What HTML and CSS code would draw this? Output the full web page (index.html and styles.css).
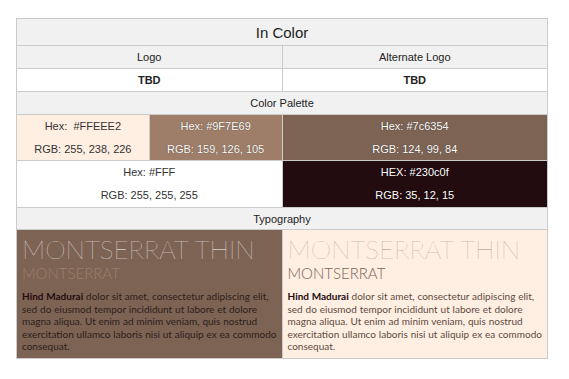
FILE: index.html
```html
<!DOCTYPE html>
<html>
<head>
<meta charset="utf-8">
<link rel="stylesheet" href="styles.css">
</head>
<body>
<div class="sheet">
  <div class="cell title span4">In Color</div>
  <div class="cell head span2">Logo</div>
  <div class="cell head span2">Alternate Logo</div>
  <div class="cell plain span2"><b>TBD</b></div>
  <div class="cell plain span2"><b>TBD</b></div>
  <div class="cell head span4">Color Palette</div>
  <div class="cell swatch sw-cream"><span>Hex:&nbsp; #FFEEE2</span><span>RGB: 255, 238, 226</span></div>
  <div class="cell swatch sw-tan dark"><span>Hex: #9F7E69</span><span>RGB: 159, 126, 105</span></div>
  <div class="cell swatch sw-brown dark span2"><span>Hex: #7c6354</span><span>RGB: 124, 99, 84</span></div>
  <div class="cell swatch sw-white span2"><span>Hex: #FFF</span><span>RGB: 255, 255, 255</span></div>
  <div class="cell swatch sw-black dark span2"><span>HEX: #230c0f</span><span>RGB: 35, 12, 15</span></div>
  <div class="cell head span4">Typography</div>
  <div class="type type-dark span2">
    <div class="thin">MONTSERRAT THIN</div>
    <div class="sub">MONTSERRAT</div>
    <p class="body"><span class="font-name">Hind Madurai</span> dolor sit amet, consectetur adipiscing elit, sed do eiusmod tempor incididunt ut labore et dolore magna aliqua. Ut enim ad minim veniam, quis nostrud exercitation ullamco laboris nisi ut aliquip ex ea commodo consequat.</p>
  </div>
  <div class="type type-light span2">
    <div class="thin">MONTSERRAT THIN</div>
    <div class="sub">MONTSERRAT</div>
    <p class="body"><span class="font-name">Hind Madurai</span> dolor sit amet, consectetur adipiscing elit, sed do eiusmod tempor incididunt ut labore et dolore magna aliqua. Ut enim ad minim veniam, quis nostrud exercitation ullamco laboris nisi ut aliquip ex ea commodo consequat.</p>
  </div>
</div>
</body>
</html>
```

FILE: styles.css
```css
html, body {
  margin: 0;
  padding: 0;
  background: #fff;
}
body {
  padding: 18px 0 0 16px;
  font-family: "Liberation Sans", Arial, sans-serif;
  color: #222;
}
.sheet {
  width: 530px;
  display: grid;
  grid-template-columns: repeat(4, 1fr);
  grid-template-rows: 26px 22px 22px 22px 45px 46px 21px 128px;
  gap: 1px;
  border: 1px solid #cbcbcb;
  background: #cbcbcb;
}
.span2 { grid-column: span 2; }
.span4 { grid-column: span 4; }
.cell {
  display: flex;
  align-items: center;
  justify-content: center;
  font-size: 11px;
  background: #fff;
}
.title {
  background: #f1f1f1;
  font-size: 15px;
  color: #222;
}
.head {
  background: #f1f1f1;
}
.plain b { font-weight: bold; }
.swatch {
  flex-direction: column;
  gap: 10px;
  line-height: 13px;
}
.dark {
  color: #fff;
  text-shadow: 0 0 1px rgba(0,0,0,0.6);
}
.sw-cream { background: #ffeee2; color: #333; }
.sw-tan { background: #9f7e69; }
.sw-brown { background: #7c6354; }
.sw-white { background: #fff; color: #333; }
.sw-black { background: #230c0f; }
.type {
  padding: 4px 2px 0 5px;
  display: flex;
  flex-direction: column;
  overflow: hidden;
}
.type-dark { background: #7c6354; }
.type-light { background: #ffeee2; }
.thin {
  font-family: Lato, sans-serif;
  font-weight: 200;
  font-size: 26px;
  line-height: 31px;
  white-space: nowrap;
}
.sub {
  font-family: Lato, sans-serif;
  font-weight: 300;
  font-size: 15px;
  line-height: 17px;
}
.type-dark .thin { color: #fff; }
.type-dark .sub { color: #9f7e69; }
.type-light .thin { color: #9a8f8a; }
.type-light .sub { color: #7c6354; }
.body {
  margin: 8px 0 0 0;
  font-family: Lato, sans-serif;
  font-size: 10px;
  line-height: 12.5px;
  word-spacing: 0.3px;
}
.font-name { font-weight: bold; }
.type-dark .body { color: #2e1e1b; }
.type-dark .font-name { color: #230c0f; }
.type-light .body { color: #5e4b40; }
.type-light .font-name { color: #230c0f; }
```
